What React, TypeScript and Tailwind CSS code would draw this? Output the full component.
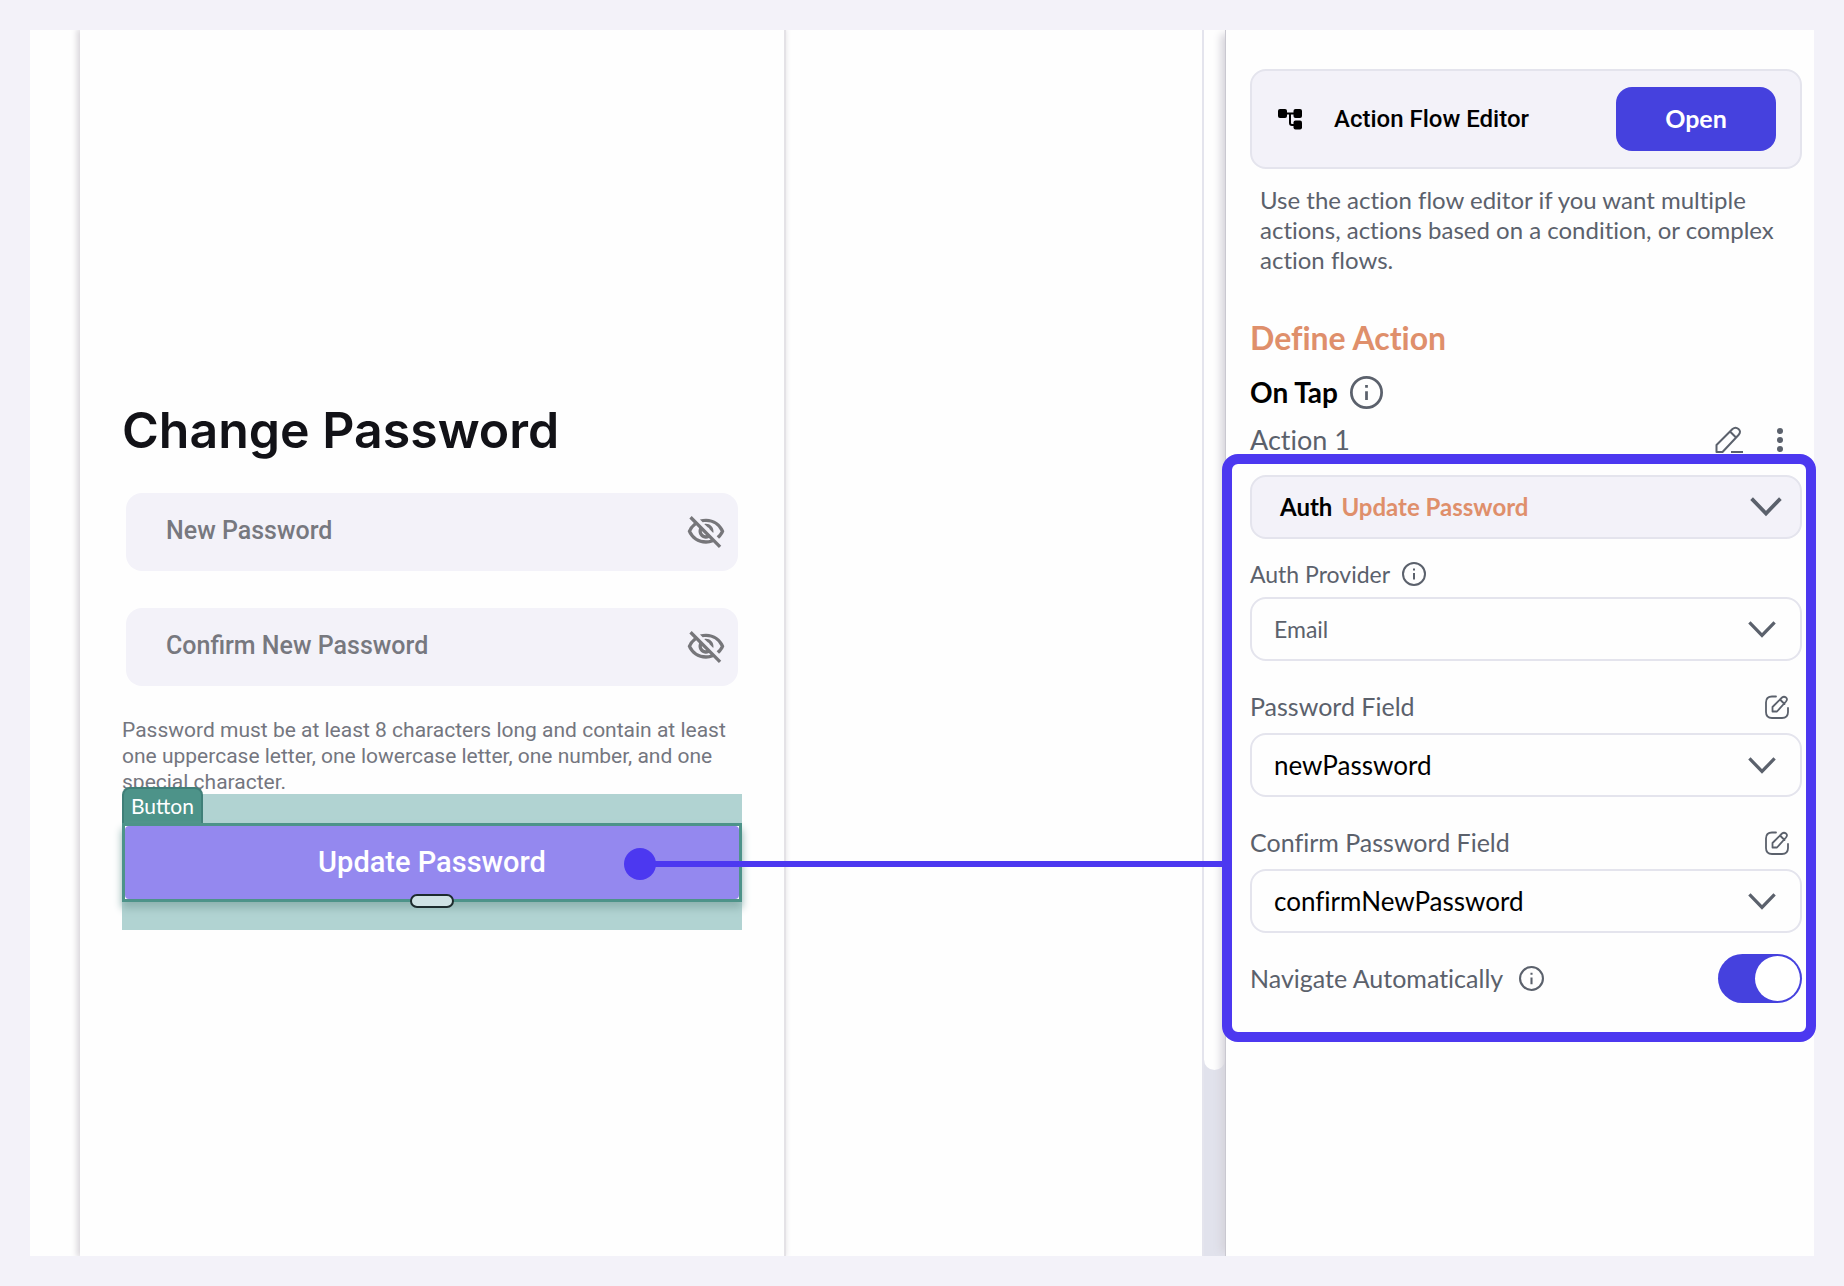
import { useState } from 'react';
import type { ReactNode } from 'react';
import { MdOutlineVisibilityOff } from 'react-icons/md';

function InfoIcon({ className }: { className: string }) {
  return (
    <svg viewBox="0 0 24 24" fill="none" stroke="currentColor" strokeWidth="2" className={className} aria-hidden="true">
      <circle cx="12" cy="12" r="11" />
      <path d="M12 11v6.5M12 6.5v2" />
    </svg>
  );
}

function ChevronIcon({ className }: { className: string }) {
  return (
    <svg viewBox="0 0 30 18" fill="none" stroke="currentColor" strokeWidth="3.5" className={className} aria-hidden="true">
      <path d="M1.5 1.5 15 15.5l13.5-14" />
    </svg>
  );
}

function FlowIcon() {
  return (
    <svg viewBox="0 0 24 24" className="size-6" aria-hidden="true">
      <rect x="0" y="2" width="9" height="9" rx="2" />
      <rect x="15.5" y="2" width="8.5" height="9" rx="2" />
      <rect x="15.5" y="13.5" width="8.5" height="9" rx="2" />
      <path d="M8 6.5h8M12 6.5V16q0 2 2 2h2" fill="none" stroke="currentColor" strokeWidth="2" />
    </svg>
  );
}

function PencilIcon() {
  return (
    <svg viewBox="0 0 28 28" fill="none" stroke="currentColor" strokeWidth="2" strokeLinejoin="round" className="size-7" aria-hidden="true">
      <path d="M1.5 26v-7L17.5 3q3-2.5 6 0t0 6L7.5 26zM15 5.5l6.5 6.5M16 26h12" />
    </svg>
  );
}

function EditBoxIcon() {
  return (
    <svg viewBox="0 0 24 24" fill="none" stroke="currentColor" strokeWidth="1.8" strokeLinecap="round" strokeLinejoin="round" className="size-6" aria-hidden="true">
      <path d="M11 1.5H7Q1 1.5 1 7.5V17q0 6 6 6h10q6 0 6-6v-4" />
      <path d="M7.5 16.5v-4.5L17 2.5q2-1.5 4 0t0 4L12 16.5zM15 4.5l4.5 4.5" />
    </svg>
  );
}

function PasswordInput({ label }: { label: string }) {
  return (
    <div className="flex h-[78px] items-center rounded-2xl bg-[#f3f2f9] pl-10 pr-3">
      <input
        type="password"
        aria-label={label}
        placeholder={label}
        className="min-w-0 flex-1 bg-transparent pb-[3px] font-medium text-[25px] outline-none placeholder:text-[#77787f]"
      />
      <button type="button" aria-label="Show password" className="text-[#76767a]">
        <MdOutlineVisibilityOff className="size-10" />
      </button>
    </div>
  );
}

function SelectBox({ id, value, className }: { id: string; value: string; className: string }) {
  return (
    <div className="relative">
      <select
        id={id}
        className={`block h-16 w-full appearance-none rounded-2xl border-2 border-[#e4e4ed] bg-[#fefefe] pl-[22px] pr-16 ${className}`}
      >
        <option>{value}</option>
      </select>
      <ChevronIcon className="pointer-events-none absolute right-[26px] top-6 w-7" />
    </div>
  );
}

function FieldLabel({ htmlFor, children }: { htmlFor: string; children: ReactNode }) {
  return (
    <div className="flex h-9 items-center justify-between pr-[13px]">
      <label htmlFor={htmlFor} className="text-[25px]">{children}</label>
      <button type="button" aria-label="Edit field">
        <EditBoxIcon />
      </button>
    </div>
  );
}

function PhonePreview() {
  return (
    <section className="w-[706px] shrink-0 border-r-2 border-[#e4e2e6] px-[42px] pt-[365px] font-['Roboto',sans-serif] shadow-[-2px_0_6px_1px_#d8d5da]">
      <h1 className="text-[50px] leading-[70px] font-semibold text-[#121217] font-['Inter',sans-serif]">Change Password</h1>
      <div className="mt-7 flex flex-col gap-[37px] px-1">
        <PasswordInput label="New Password" />
        <PasswordInput label="Confirm New Password" />
      </div>
      <p className="-mb-[1px] mt-[31px] text-[21px] leading-[26px] text-[#74767f]">
        Password must be at least 8 characters long and contain at least one uppercase letter, one lowercase letter, one number, and one special character.
      </p>
      <div className="relative bg-[#b1d3d2] pt-[29px] pb-7">
        <span className="absolute -top-[7px] left-0 flex h-9 items-center rounded-t-lg border-2 border-b-0 border-[#3f7f78] bg-[#4d9389] px-[7px] text-[21px] text-white font-['Lato',sans-serif]">
          Button
        </span>
        <div className="relative border-[3px] border-[#4d9389] bg-white shadow-[0_6px_8px_#8fb3b1]">
          <button type="button" className="block h-[73px] w-full rounded bg-[#9488ef] text-[29px] font-medium text-white">
            Update Password
          </button>
          <span className="absolute -bottom-[9px] left-1/2 h-[14px] w-11 -translate-x-1/2 rounded-full border-2 border-[#1d2b2d] bg-[#cfe2e4]" />
          <span className="absolute left-[499px] top-[22px] size-8 rounded-full bg-[#4c38f0]" />
        </div>
      </div>
    </section>
  );
}

function ActionPanel() {
  const [navigate, setNavigate] = useState(true);

  return (
    <aside className="w-[589px] shrink-0 border-l border-[#c9c8d0] bg-[#fefefe] pt-[39px] pl-6 pr-3 text-[#5b616c] shadow-[-8px_0_8px_-4px_#d5d3da] [font-variant-ligatures:none]">
      <div className="flex h-[100px] items-center rounded-2xl border-2 border-[#e4e4ed] bg-[#f3f2f9] pl-[26px] pr-6 text-black">
        <FlowIcon />
        <span className="ml-8 flex-1 text-2xl font-medium font-['Roboto',sans-serif]">Action Flow Editor</span>
        <button type="button" className="h-16 w-40 rounded-2xl bg-[#4541de] text-[25px] font-bold text-white">Open</button>
      </div>
      <p className="mt-4 px-[10px] text-2xl leading-[30px]">
        Use the action flow editor if you want multiple actions, actions based on a condition, or complex action flows.
      </p>
      <h2 className="mt-[39px] text-[32px] leading-[48px] font-bold text-[#df8f6b]">Define Action</h2>
      <div className="mt-[6px] flex h-12 items-center gap-3">
        <h3 className="text-[28px] font-bold text-black">On Tap</h3>
        <InfoIcon className="size-[33px]" />
      </div>
      <div className="flex h-12 items-center justify-between pr-[19px]">
        <span className="text-[27px]">Action 1</span>
        <div className="flex items-center gap-[34px]">
          <button type="button" aria-label="Rename action">
            <PencilIcon />
          </button>
          <button type="button" aria-label="More options">
            <svg viewBox="0 0 6 24" fill="currentColor" className="h-6 w-[6px]" aria-hidden="true">
              <circle cx="3" cy="3" r="3" />
              <circle cx="3" cy="12" r="3" />
              <circle cx="3" cy="21" r="3" />
            </svg>
          </button>
        </div>
      </div>

      <div className="relative -mt-[10px] -ml-7 -mr-[14px] rounded-2xl border-10 border-[#4c38f0] pt-[11px] pr-1 pb-[29px] pl-[18px]">
        {/* connector back to the selected button */}
        <span className="absolute right-full top-[397px] h-[6px] w-[590px] bg-[#4c38f0]" />
        <button type="button" className="flex h-16 w-full items-center gap-[9px] rounded-2xl border-2 border-[#e4e4ed] bg-[#f3f2f9] pl-7 pr-[18px] text-2xl font-bold">
          <span className="text-black">Auth</span>
          <span className="flex-1 text-left text-[#df8f6b]">Update Password</span>
          <ChevronIcon className="w-8" />
        </button>
        <div className="mt-[17px] flex h-9 items-center gap-3">
          <label htmlFor="provider" className="text-[23px]">Auth Provider</label>
          <InfoIcon className="size-6" />
        </div>
        <div className="mt-[5px]">
          <SelectBox id="provider" value="Email" className="text-[23px]" />
        </div>
        <div className="mt-7 flex flex-col gap-2">
          <FieldLabel htmlFor="password">Password Field</FieldLabel>
          <SelectBox id="password" value="newPassword" className="text-[26px] text-black" />
        </div>
        <div className="mt-7 flex flex-col gap-2">
          <FieldLabel htmlFor="confirm">Confirm Password Field</FieldLabel>
          <SelectBox id="confirm" value="confirmNewPassword" className="text-[26px] text-black" />
        </div>
        <div className="mt-[21px] flex h-[49px] items-center">
          <label htmlFor="navigate" className="text-[25px]">Navigate Automatically</label>
          <InfoIcon className="ml-4 size-[25px]" />
          <input
            id="navigate"
            type="checkbox"
            role="switch"
            checked={navigate}
            onChange={(e) => setNavigate(e.target.checked)}
            className="ml-auto flex h-[49px] w-[84px] appearance-none items-center rounded-full bg-gray-300 p-[2px] before:size-[45px] before:rounded-full before:bg-white checked:justify-end checked:bg-[#4541de]"
          />
        </div>
      </div>
    </aside>
  );
}

export default function App() {
  return (
    <main className="min-h-screen bg-[#f3f2f9] p-[30px] font-['Lato',sans-serif]">
      <div className="flex min-h-[calc(100vh-60px)] overflow-y-clip bg-[#fefefe] pl-[50px]">
        <PhonePreview />
        <div className="flex-1" />
        <div className="w-[23px] border-l-2 border-[#e4e4ed] bg-[#e1e2ec]">
          <div className="h-[1040px] rounded-b-xl bg-[#fefefe]" />
        </div>
        <ActionPanel />
      </div>
    </main>
  );
}
